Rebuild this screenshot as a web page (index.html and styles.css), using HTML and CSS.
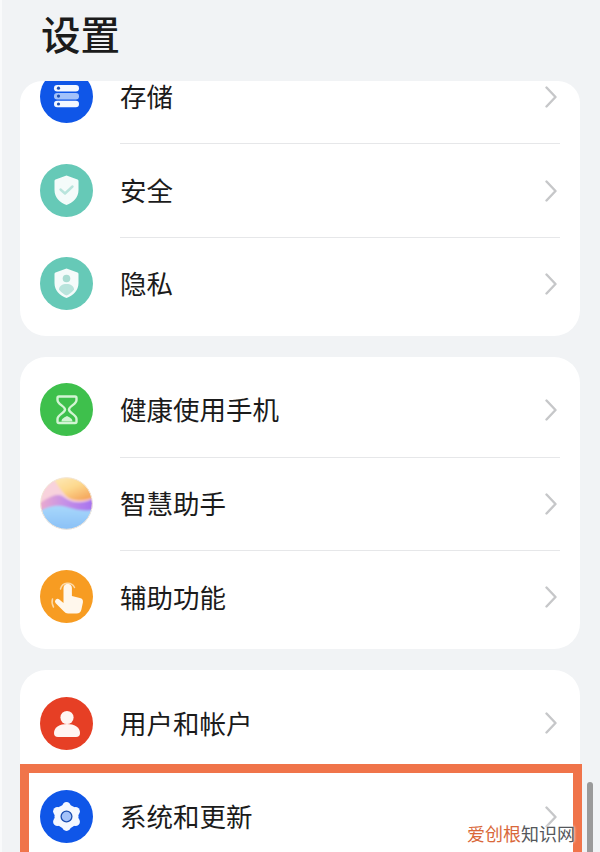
FILE: index.html
```html
<!DOCTYPE html>
<html lang="zh-CN">
<head>
  <title>设置</title>
  <meta name="viewport" content="width=device-width, initial-scale=1">
  <link rel="stylesheet" href="styles.css">
</head>
<body>
  <svg class="defs" width="0" height="0" aria-hidden="true">
    <symbol id="chevron" viewBox="0 0 12 22">
      <polyline points="1.5,1.5 10.5,11 1.5,20.5" fill="none" stroke="#c6c7c9" stroke-width="2.4" stroke-linecap="round" stroke-linejoin="round"/>
    </symbol>
    <clipPath id="orb"><circle cx="26.5" cy="26.5" r="26"/></clipPath>
    <filter id="soft" x="-10%" y="-10%" width="120%" height="120%"><feGaussianBlur stdDeviation="0.8"/></filter>
    <linearGradient id="orb-band" x1="0" y1="0" x2="1" y2="0">
      <stop offset="0" stop-color="#efaecb"/>
      <stop offset="0.45" stop-color="#c792e6"/>
      <stop offset="1" stop-color="#a36ff0"/>
    </linearGradient>
    <linearGradient id="orb-top" x1="0" y1="0" x2="0.7" y2="1">
      <stop offset="0" stop-color="#fdeec4"/>
      <stop offset="0.55" stop-color="#fdd98e"/>
      <stop offset="1" stop-color="#f5a65c"/>
    </linearGradient>
    <linearGradient id="orb-sea" x1="0" y1="0" x2="0" y2="1">
      <stop offset="0" stop-color="#a8d8fb"/>
      <stop offset="1" stop-color="#86bdf6"/>
    </linearGradient>
  </svg>

  <div class="page">
    <div class="header"><h1>设置</h1></div>

    <div class="list">
      <div class="card card-scrolled">
        <div class="row">
          <svg class="icon" viewBox="0 0 53 53">
            <circle cx="26.5" cy="26.5" r="26.5" fill="#0f56e8"/>
            <rect x="14" y="15" width="25" height="6.5" rx="3.2" fill="#f4f8ff"/>
            <rect x="14" y="22.900" width="25" height="6.5" rx="3.2" fill="#a3c2fa"/>
            <rect x="14" y="30.800" width="25" height="6.5" rx="3.2" fill="#f4f8ff"/>
            <circle cx="18.5" cy="18.200" r="1.600" fill="#1d4fb0"/>
            <circle cx="18.5" cy="26.100" r="1.600" fill="#1d4fb0"/>
            <circle cx="18.5" cy="34" r="1.600" fill="#1d4fb0"/>
          </svg>
          <div class="row-body"><span class="label">存储</span><svg class="chevron"><use href="#chevron"/></svg></div>
        </div>
        <div class="row">
          <svg class="icon" viewBox="0 0 53 53">
            <circle cx="26.5" cy="26.5" r="26.5" fill="#66c9b7"/>
            <path d="M26.5 11.5 L37.5 15.5 a1.5 1.5 0 0 1 1 1.4 V26 c0 7.5 -5.5 12.5 -12 15 c-6.5 -2.5 -12 -7.5 -12 -15 V16.9 a1.5 1.5 0 0 1 1 -1.4 Z" fill="#f4fbfa"/>
            <polyline points="20.5,25.5 25,29.5 32.5,22.5" fill="none" stroke="#b9e4dc" stroke-width="2.4" stroke-linecap="round" stroke-linejoin="round"/>
          </svg>
          <div class="row-body"><span class="label">安全</span><svg class="chevron"><use href="#chevron"/></svg></div>
        </div>
        <div class="row">
          <svg class="icon" viewBox="0 0 53 53">
            <circle cx="26.5" cy="26.5" r="26.5" fill="#66c9b7"/>
            <path d="M26.5 11.5 L37.5 15.5 a1.5 1.5 0 0 1 1 1.4 V26 c0 7.5 -5.5 12.5 -12 15 c-6.5 -2.5 -12 -7.5 -12 -15 V16.9 a1.5 1.5 0 0 1 1 -1.4 Z" fill="#f4fbfa"/>
            <circle cx="26.5" cy="21.5" r="3.8" fill="#a9dcd2"/>
            <path d="M19 32.5 c0 -3.5 3.4 -5.5 7.5 -5.5 s7.5 2 7.5 5.5 c-2 2.8 -4.6 4.8 -7.5 6 c-2.9 -1.2 -5.5 -3.2 -7.5 -6 Z" fill="#b9e4dc"/>
          </svg>
          <div class="row-body"><span class="label">隐私</span><svg class="chevron"><use href="#chevron"/></svg></div>
        </div>
      </div>

      <div class="card">
        <div class="row">
          <svg class="icon" viewBox="0 0 53 53">
            <circle cx="26.5" cy="26.5" r="26.5" fill="#3ec04c"/>
            <path d="M21.500 38.500 c0 -3 3 -4 5.500 -5.500 c2.500 1.500 5.500 2.500 5.500 5.500 Z" fill="#d2f4d3"/>
            <path d="M19 13.500 H35 a1.500 1.500 0 0 1 1.500 1.500 V17 c0 4.500 -7.500 6 -7.500 9.500 c0 3.500 7.500 5 7.500 9.500 V38.500 a1.500 1.500 0 0 1 -1.500 1.500 H19 a1.500 1.500 0 0 1 -1.500 -1.500 V36 c0 -4.500 7.500 -6 7.500 -9.500 c0 -3.500 -7.500 -5 -7.500 -9.500 V15 a1.500 1.500 0 0 1 1.500 -1.500 Z" fill="none" stroke="#d2f4d3" stroke-width="2.400" stroke-linejoin="round"/>
          </svg>
          <div class="row-body"><span class="label">健康使用手机</span><svg class="chevron"><use href="#chevron"/></svg></div>
        </div>
        <div class="row">
          <svg class="icon" viewBox="0 0 53 53">
            <g clip-path="url(#orb)">
              <g filter="url(#soft)">
                <rect x="-3" y="-3" width="59" height="59" fill="#f8d2dc"/>
                <path d="M12 -3 H56 V19 C46 25 32 25 26 19 C22 14 16 8 12 -3 Z" fill="url(#orb-top)"/>
                <path d="M-3 27 C6 23 12 17 19 18 C25 19 28 25 36 25 C44 26 50 24 56 19 V40 H-3 Z" fill="url(#orb-band)"/>
                <path d="M-3 37 C4 30 14 28 22 29 C32 31 42 36 56 32 V56 H-3 Z" fill="url(#orb-sea)"/>
              </g>
            </g>
            <circle cx="26.5" cy="26.5" r="25.800" fill="none" stroke="#f3e6d8" stroke-width="1"/>
          </svg>
          <div class="row-body"><span class="label">智慧助手</span><svg class="chevron"><use href="#chevron"/></svg></div>
        </div>
        <div class="row">
          <svg class="icon" viewBox="0 0 53 53">
            <circle cx="26.5" cy="26.5" r="26.5" fill="#f79c22"/>
            <path d="M23.500 18 a4.200 4.200 0 0 1 8.400 0 V26 l8 2 a4 4 0 0 1 3 4.500 l-1.500 7 a5 5 0 0 1 -5 4 H28 a5 5 0 0 1 -4 -2 L15.500 33 a2.600 2.600 0 0 1 3.800 -3.500 l4.200 3.500 Z" fill="#fff7ec"/>
            <path d="M20.500 19 a7.500 7.500 0 0 1 14 -1.500" fill="none" stroke="#fcd9a8" stroke-width="1.500" stroke-linecap="round"/>
            <path d="M12.500 29 a10 10 0 0 0 1 8" fill="none" stroke="#fcd9a8" stroke-width="1.500" stroke-linecap="round"/>
          </svg>
          <div class="row-body"><span class="label">辅助功能</span><svg class="chevron"><use href="#chevron"/></svg></div>
        </div>
      </div>

      <div class="card">
        <div class="row">
          <svg class="icon" viewBox="0 0 53 53">
            <circle cx="26.5" cy="26.5" r="26.5" fill="#e63f25"/>
            <circle cx="27" cy="20.500" r="6.600" fill="#fff5f2"/>
            <path d="M14 36 c0 -6 6 -9 13 -9 s13 3 13 9 a4 4 0 0 1 -4 4 H18 a4 4 0 0 1 -4 -4 Z" fill="#fff5f2"/>
          </svg>
          <div class="row-body"><span class="label">用户和帐户</span><svg class="chevron"><use href="#chevron"/></svg></div>
        </div>
        <div class="row">
          <svg class="icon" viewBox="0 0 53 53">
            <circle cx="26.5" cy="26.5" r="26.5" fill="#0f56e8"/>
            <g fill="#f4f8ff">
              <circle cx="26.5" cy="26.5" r="12"/>
              <circle cx="26.5" cy="16.500" r="4.400"/>
              <circle cx="26.5" cy="36.500" r="4.400"/>
              <circle cx="17.500" cy="21.300" r="4.400"/>
              <circle cx="35.500" cy="21.300" r="4.400"/>
              <circle cx="17.500" cy="31.700" r="4.400"/>
              <circle cx="35.500" cy="31.700" r="4.400"/>
            </g>
            <circle cx="26.5" cy="26.5" r="5.400" fill="#a3c2fa" stroke="#1d4fb0" stroke-width="1.300"/>
          </svg>
          <div class="row-body"><span class="label">系统和更新</span><svg class="chevron"><use href="#chevron"/></svg></div>
        </div>
      </div>
    </div>

    <div class="highlight"></div>
    <div class="scrollbar"></div>
    <div class="watermark"><span class="watermark-brand">爱创根</span>知识网</div>
  </div>
</body>
</html>
```

FILE: styles.css
```css
* {
  box-sizing: border-box;
}

html,
body {
  margin: 0;
  height: 100%;
}

body {
  font-family: "Noto Sans CJK SC", "Noto Sans", sans-serif;
  color: #1b1b1b;
}

.defs {
  display: block;
  height: 0;
}

.page {
  position: relative;
  display: flex;
  flex-direction: column;
  height: 852px;
  overflow: hidden;
  background: linear-gradient(to right, #f9fafb 2px, #f1f3f5 2px);
}

.header {
  flex: none;
  height: 81px;
  padding-left: 41px;
}

.header h1 {
  margin: 0;
  font-size: 39.5px;
  font-weight: 500;
  line-height: 65px;
}

/* the scrolling area: its top corners are rounded too */
.list {
  flex: 1;
  display: flex;
  flex-direction: column;
  gap: 21px;
  margin: 0 20px;
  overflow: hidden;
  border-radius: 22px 22px 0 0;
}

.card {
  flex: none;
  padding: 6px 0;
  background: #fff;
  border-radius: 26px;
}

.card-scrolled {
  margin-top: -37px;
}

.row {
  display: flex;
  align-items: center;
  gap: 27px;
  height: 93.4px;
  padding-left: 20px;
}

.icon {
  flex: none;
  width: 53px;
  height: 53px;
}

.row-body {
  flex: 1;
  display: flex;
  align-items: center;
  justify-content: space-between;
  align-self: stretch;
  margin-right: 20px;
  padding-right: 3px;
}

.row + .row .row-body {
  border-top: 1px solid #e6e7e9;
}

.label {
  margin-bottom: 2px;
  font-size: 26.5px;
  line-height: 27px;
}

.chevron {
  flex: none;
  width: 12px;
  height: 22px;
}

.highlight {
  position: absolute;
  left: 20px;
  top: 764px;
  width: 562px;
  height: 110px;
  border: 9px solid #f0744a;
}

.scrollbar {
  position: absolute;
  left: 587px;
  top: 782px;
  width: 6px;
  height: 80px;
  background: #9a9a9a;
  border-radius: 3px;
}

.watermark {
  position: absolute;
  left: 467px;
  top: 820px;
  font-size: 18px;
  line-height: 27px;
  color: #55585c;
  text-shadow: 0 0 3px #fff, 0 0 3px #fff;
}

.watermark-brand {
  color: #d9683a;
}
```
